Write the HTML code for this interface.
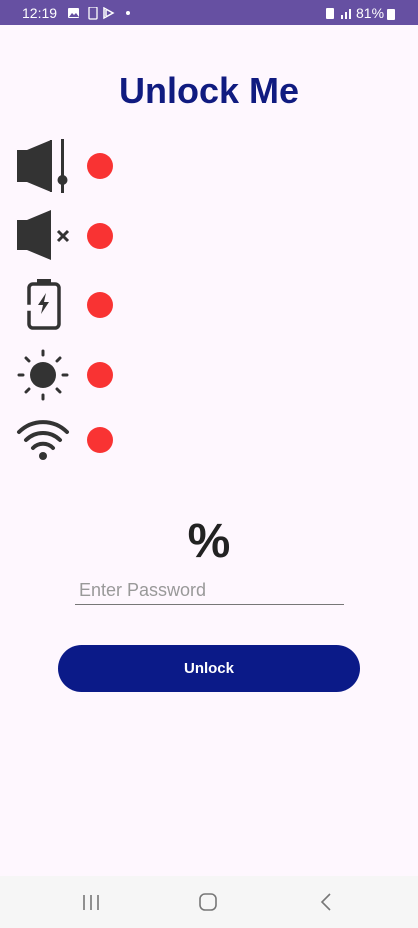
<!DOCTYPE html>
<html><head><meta charset="utf-8"><style>
*{margin:0;padding:0;box-sizing:border-box}
body{width:418px;height:928px;background:#FEF7FE;font-family:"Liberation Sans",Roboto,sans-serif;position:relative;overflow:hidden}
.sb{position:absolute;top:0;left:0;width:418px;height:25px;background:#6650A2;color:#fff;font-size:14px}
.abs{position:absolute}
.dot{position:absolute;left:87px;width:26px;height:26px;border-radius:50%;background:#F93333}
</style></head><body>
<div class="sb">
<span class="abs" style="left:22px;top:5px">12:19</span>
<svg class="abs" style="left:67px;top:7px" width="70" height="13"><rect x="1" y="1" width="11" height="10" rx="1" fill="#fff"/><path d="M2 10l3-4 2 2 2-2 3 4z" fill="#6650A2"/><rect x="22" y="0" width="8" height="12" rx="1" fill="none" stroke="#fff" stroke-width="1.3"/><path d="M37 1l9 5-9 5z M39 3v6" fill="none" stroke="#fff" stroke-width="1.5"/><circle cx="61" cy="6" r="2" fill="#fff"/></svg>
<svg class="abs" style="left:325px;top:7px" width="30" height="13"><rect x="1" y="1" width="8" height="11" rx="1" fill="#fff"/><rect x="16" y="8" width="2" height="4" fill="#fff"/><rect x="20" y="5" width="2" height="7" fill="#fff"/><rect x="24" y="2" width="2" height="10" fill="#fff"/></svg>
<span class="abs" style="left:356px;top:5px">81%</span>
<div class="abs" style="left:387px;top:9px;width:8px;height:11px;background:#fff;border-radius:1px"></div>
</div>
<div class="abs" style="left:0;top:70px;width:418px;text-align:center;font-size:36px;font-weight:bold;color:#101B80">Unlock Me</div>

<svg class="abs" style="left:0;top:130px" width="80" height="340" fill="#333">
<path d="M17 20h10l24-10v52l-24-10h-10z"/><path d="M51 10v52" stroke="#333" stroke-width="2"/>
<rect x="61" y="9" width="3" height="54"/><circle cx="62.5" cy="50" r="5"/>
<path d="M17 90h10l24-10v50l-24-10h-10z"/><path d="M58 101l10 10M68 101l-10 10" stroke="#333" stroke-width="3"/>
<rect x="29" y="154" width="30" height="44" rx="4" fill="none" stroke="#333" stroke-width="3.5" stroke-dasharray="112 6"/><rect x="37" y="149" width="14" height="5"/><path d="M46 163l-8 12h5l-2 9 8-12h-5z"/>
<circle cx="43" cy="245" r="13"/><g stroke="#333" stroke-width="3" stroke-linecap="round"><path d="M43 221v4M43 265v4M19 245h4M63 245h4M26 228l3 3M57 259l3 3M60 228l-3 3M29 259l-3 3"/></g>
<g fill="none" stroke="#333" stroke-width="4" stroke-linecap="round"><path d="M19 302a34 34 0 0 1 48 0"/><path d="M26 310a24 24 0 0 1 34 0"/><path d="M33 318a14 14 0 0 1 20 0"/></g><circle cx="43" cy="326" r="4"/>
</svg>
<div class="dot" style="top:153px"></div><div class="dot" style="top:223px"></div><div class="dot" style="top:292px"></div><div class="dot" style="top:362px"></div><div class="dot" style="top:427px"></div>

<div class="abs" style="left:0;top:514px;width:418px;text-align:center;font-size:48px;font-weight:bold;color:#222">%</div>
<div class="abs" style="left:79px;top:580px;font-size:18px;color:#999">Enter Password</div>
<div class="abs" style="left:75px;top:604px;width:269px;height:1px;background:#777"></div>
<div class="abs" style="left:58px;top:645px;width:302px;height:47px;border-radius:24px;background:#0B1A88;color:#fff;font-size:15px;font-weight:bold;text-align:center;line-height:47px">Unlock</div>

<div class="abs" style="left:0;top:876px;width:418px;height:52px;background:#F6F6F6">
<svg class="abs" style="left:0;top:0" width="418" height="52" fill="none" stroke="#777" stroke-width="1.6"><path d="M84 19v15M91 19v15M98 19v15"/><rect x="200" y="18" width="16" height="16" rx="5"/><path d="M330 18l-8 8 8 8"/></svg>
</div>
</body></html>
